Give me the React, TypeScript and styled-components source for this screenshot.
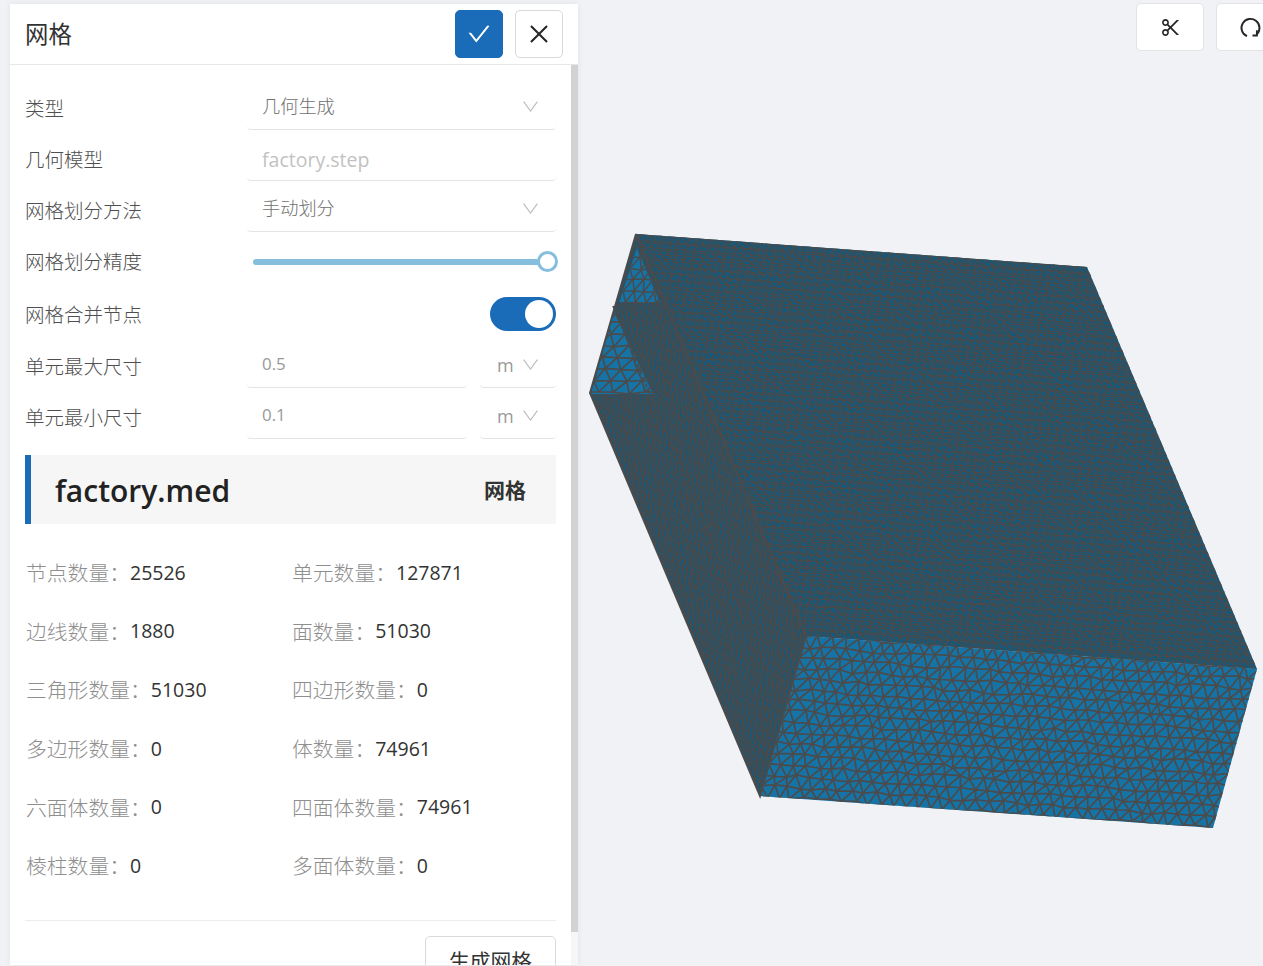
import React, { useMemo } from "react";
import styled, { createGlobalStyle } from "styled-components";
import { AiOutlineCheck, AiOutlineClose, AiOutlineScissor } from "react-icons/ai";

const GlobalStyle = createGlobalStyle`
  html, body { margin: 0; padding: 0; height: 100%; overflow: hidden; background: #f0f2f6; }
  * { box-sizing: border-box; }
  body { font-family: "Open Sans", "Noto Sans CJK SC", sans-serif; }
`;

const Page = styled.div`
  display: flex;
  height: 966px;
  width: 1263px;
  padding: 4px 0 1px 10px;
  overflow: hidden;
  background: #f0f2f6;
  position: relative;
`;

const Panel = styled.aside`
  position: relative;
  z-index: 1;
  flex: 0 0 568px;
  height: 961px;
  background: #fff;
  display: flex;
  flex-direction: column;
  box-shadow: 0 0 6px rgba(0, 0, 0, 0.07);
`;

const PanelHeader = styled.header`
  flex: 0 0 61px;
  display: flex;
  align-items: center;
  padding: 0 15px;
  border-bottom: 1px solid #e6e6e6;
`;

const Title = styled.h1`
  flex: 1;
  margin: 2px 0 0;
  font-size: 23.4px;
  font-weight: 400;
  color: #333;
  line-height: 1;
`;

const IconButton = styled.button<{ $primary?: boolean }>`
  width: 48px;
  height: 48px;
  margin-left: 12px;
  padding: 0;
  display: flex;
  align-items: center;
  justify-content: center;
  border-radius: 5px;
  font-size: 26px;
  color: ${(p) => (p.$primary ? "#fff" : "#262626")};
  background: ${(p) => (p.$primary ? "#1a6bb8" : "#fff")};
  border: 1px solid ${(p) => (p.$primary ? "#1a6bb8" : "#d9d9d9")};
`;

const PanelBody = styled.div`
  flex: 1;
  display: flex;
  min-height: 0;
`;

const Content = styled.div`
  flex: 1;
  min-width: 0;
  padding: 14px 15px 0;
  overflow: hidden;
`;

const ScrollTrack = styled.div`
  flex: 0 0 7px;
  background: #f6f6f6;
`;

const ScrollThumb = styled.div`
  height: 867px;
  background: #d2d2d2;
`;

const Row = styled.div<{ $height?: number; $center?: boolean }>`
  display: grid;
  grid-template-columns: 222px 1fr;
  height: ${(p) => p.$height ?? 51}px;
  align-items: ${(p) => (p.$center ? "center" : "end")};
`;

const Label = styled.label<{ $center?: boolean; $lift?: boolean }>`
  align-self: ${(p) => (p.$center ? "center" : "stretch")};
  display: flex;
  align-items: center;
  padding-top: ${(p) => (p.$center ? 0 : 5)}px;
  padding-bottom: ${(p) => (p.$lift ? 2 : 0)}px;
  font-size: 19.5px;
  font-weight: 300;
  color: #4f4f4f;
`;

const Control = styled.div<{ $width?: number }>`
  height: 46px;
  width: ${(p) => (p.$width ? `${p.$width}px` : "100%")};
  flex: ${(p) => (p.$width ? "none" : 1)};
  display: flex;
  align-items: center;
  padding: 0 15px;
  border-bottom: 1px solid #e4e4e4;
  border-radius: 0 0 4px 4px;
  font-size: 18.2px;
  color: #707070;
`;

const SelectText = styled.span`
  flex: 1;
  font-weight: 300;
  margin-top: -4px;
`;

const InputText = styled.span<{ $disabled?: boolean }>`
  font-size: ${(p) => (p.$disabled ? 19.5 : 16.9)}px;
  color: ${(p) => (p.$disabled ? "#c2c2c2" : "#999")};
  margin-top: ${(p) => (p.$disabled ? 3 : -2)}px;
`;

const UnitText = styled.span`
  flex: 1;
  font-size: 18px;
  color: #999;
`;

const Chevron = styled.svg`
  display: block;
  width: 15px;
  height: 11px;
  margin-right: 3px;
  fill: none;
  stroke: #bdbdbd;
  stroke-width: 1.2;
`;

const InputPair = styled.div`
  display: flex;
  gap: 13px;
  width: 100%;
`;

const UnitControl = styled(Control)`
  padding: 0 15px 0 17px;
`;

const SliderTrack = styled.div`
  position: relative;
  height: 6px;
  margin: 2px 9px 0 6px;
  background: #86bede;
  border-radius: 3px;
`;

const SliderHandle = styled.span`
  position: absolute;
  right: -11px;
  top: -8px;
  width: 21px;
  height: 21px;
  border-radius: 50%;
  background: #fff;
  border: 3px solid #86bede;
`;

const SwitchWrap = styled.div`
  display: flex;
  justify-content: flex-end;
`;

const Switch = styled.span`
  display: flex;
  justify-content: flex-end;
  align-items: center;
  width: 66px;
  height: 34px;
  padding: 0 3px;
  border-radius: 17px;
  background: #1a6bb8;
`;

const Knob = styled.span`
  width: 28px;
  height: 28px;
  border-radius: 50%;
  background: #fff;
`;

const FileCard = styled.section`
  display: flex;
  align-items: center;
  justify-content: space-between;
  height: 69px;
  margin-top: 16px;
  padding: 0 30px 0 24px;
  background: #f6f6f6;
  border-left: 6px solid #1a6bb8;
`;

const FileName = styled.span`
  margin-top: 2px;
  font-family: "Open Sans", sans-serif;
  font-size: 30px;
  font-weight: 600;
  color: #222;
`;

const FileKind = styled.span`
  margin-top: -2px;
  font-size: 21px;
  font-weight: 700;
  color: #333;
`;

const StatGrid = styled.dl`
  display: grid;
  grid-template-columns: 266px 1fr;
  grid-auto-rows: 58.6px;
  margin: 19px 0 0 1px;
  align-items: center;
`;

const Stat = styled.div`
  display: flex;
  align-items: center;
`;

const StatName = styled.dt`
  font-size: 20.8px;
  font-weight: 300;
  color: #8f8f8f;
`;

const StatValue = styled.dd`
  margin: 0;
  font-size: 19.5px;
  color: #333;
`;

const Divider = styled.hr`
  margin: 25px 0 0;
  border: 0;
  border-top: 1px solid #ececec;
`;

const Footer = styled.div`
  display: flex;
  justify-content: flex-end;
  margin-top: 15px;
`;

const GenerateButton = styled.button`
  width: 131px;
  height: 48px;
  padding: 0;
  border: 1px solid #d9d9d9;
  border-radius: 5px;
  background: #fff;
  font-family: inherit;
  font-size: 20.8px;
  font-weight: 400;
  color: #333;
`;

const Toolbar = styled.div`
  position: absolute;
  top: 3px;
  left: 1136px;
  display: flex;
  gap: 12px;
`;

const ToolButton = styled.button`
  flex: none;
  width: 68px;
  height: 48px;
  padding: 0;
  display: flex;
  align-items: center;
  justify-content: center;
  background: #fff;
  border: 1px solid #e3e3e3;
  border-radius: 5px;
  color: #262626;
  font-size: 23px;
`;

const MeshSvg = styled.svg`
  position: absolute;
  left: 0;
  top: 0;
  width: 1263px;
  height: 966px;
`;

type Pt = [number, number];

function rng(seed: number) {
  let s = seed;
  return () => {
    s = (s * 1664525 + 1013904223) % 4294967296;
    return s / 4294967296;
  };
}

function lattice(o: Pt, u: Pt, v: Pt, nu: number, nv: number, jitter: number, seed: number) {
  const r = rng(seed);
  const pts: Pt[][] = [];
  for (let j = 0; j <= nv; j++) {
    const row: Pt[] = [];
    for (let i = 0; i <= nu + 1; i++) {
      const a = (i - 0.5 + (j % 2 ? 0.5 : 0) + (r() - 0.5) * jitter) / nu;
      const b = (j + (r() - 0.5) * jitter) / nv;
      row.push([
        o[0] + (u[0] - o[0]) * a + (v[0] - o[0]) * b,
        o[1] + (u[1] - o[1]) * a + (v[1] - o[1]) * b,
      ]);
    }
    pts.push(row);
  }
  const seg = (p: Pt, q: Pt) =>
    `M${p[0].toFixed(1)} ${p[1].toFixed(1)}L${q[0].toFixed(1)} ${q[1].toFixed(1)}`;
  let d = "";
  for (let j = 0; j <= nv; j++) {
    for (let i = 0; i <= nu + 1; i++) {
      if (i <= nu) d += seg(pts[j][i], pts[j][i + 1]);
      if (j < nv) {
        d += seg(pts[j][i], pts[j + 1][i]);
        const k = j % 2 ? i + 1 : i - 1;
        if (k >= 0 && k <= nu + 1) d += seg(pts[j][i], pts[j + 1][k]);
      }
    }
  }
  return d;
}

const poly = (p: Pt[]) => p.map((q) => q.join(",")).join(" ");

type Layer = { o: Pt; u: Pt; v: Pt; nu: number; nv: number; w: number; j: number; seed: number };

function Face({ id, points, fill, layers }: { id: string; points: Pt[]; fill: string; layers: Layer[] }) {
  const paths = useMemo(
    () => layers.map((l) => lattice(l.o, l.u, l.v, l.nu, l.nv, l.j, l.seed)),
    [layers]
  );
  return (
    <g>
      <clipPath id={id}>
        <polygon points={poly(points)} />
      </clipPath>
      <polygon points={poly(points)} fill={fill} />
      <g clipPath={`url(#${id})`} fill="none" stroke="#4b4b4b">
        {paths.map((d, i) => (
          <path key={i} d={d} strokeWidth={layers[i].w} />
        ))}
      </g>
    </g>
  );
}

const A: Pt = [636, 234];
const B: Pt = [1087, 267];
const C: Pt = [1257, 669];
const D: Pt = [806, 636];
const E: Pt = [760, 796];
const F: Pt = [1213, 828];
const G: Pt = [590, 393];

const topLayers: Layer[] = [
  { o: A, u: B, v: D, nu: 56, nv: 62, w: 1.05, j: 0.2, seed: 11 },
  { o: A, u: B, v: D, nu: 47, nv: 52, w: 0.95, j: 0.25, seed: 29 },
];
const leftLayers: Layer[] = [
  { o: G, u: A, v: E, nu: 18, nv: 58, w: 1.05, j: 0.2, seed: 5 },
  { o: G, u: A, v: E, nu: 15, nv: 48, w: 0.95, j: 0.25, seed: 17 },
];
const frontLayers: Layer[] = [{ o: E, u: F, v: D, nu: 36, nv: 15, w: 1.7, j: 0.35, seed: 41 }];
const triLayerA: Layer[] = [
  { o: [619, 303], u: [662, 303], v: [638, 246], nu: 4, nv: 5, w: 1.5, j: 0.2, seed: 3 },
];
const triLayerB: Layer[] = [
  { o: [590, 393], u: [654, 393], v: [618, 311], nu: 4, nv: 7, w: 1.7, j: 0.2, seed: 7 },
];

function ChevronIcon() {
  return (
    <Chevron viewBox="0 0 15 11">
      <polyline points="0.6,0.6 7.5,10 14.4,0.6" />
    </Chevron>
  );
}

function SelectField({ label, value }: { label: string; value: string }) {
  return (
    <Row>
      <Label>{label}</Label>
      <Control>
        <SelectText>{value}</SelectText>
        <ChevronIcon />
      </Control>
    </Row>
  );
}

function SizeField({ label, value }: { label: string; value: string }) {
  return (
    <Row>
      <Label>{label}</Label>
      <InputPair>
        <Control>
          <InputText>{value}</InputText>
        </Control>
        <UnitControl $width={76}>
          <UnitText>m</UnitText>
          <ChevronIcon />
        </UnitControl>
      </InputPair>
    </Row>
  );
}

const stats: [string, string][] = [
  ["节点数量：", "25526"],
  ["单元数量：", "127871"],
  ["边线数量：", "1880"],
  ["面数量：", "51030"],
  ["三角形数量：", "51030"],
  ["四边形数量：", "0"],
  ["多边形数量：", "0"],
  ["体数量：", "74961"],
  ["六面体数量：", "0"],
  ["四面体数量：", "74961"],
  ["棱柱数量：", "0"],
  ["多面体数量：", "0"],
];

export default function App() {
  return (
    <Page>
      <GlobalStyle />
      <MeshSvg viewBox="0 0 1263 966">
        <Face id="left" points={[A, D, E, G]} fill="#0e5a80" layers={leftLayers} />
        <Face id="triA" points={[[637, 248], [660, 303], [619, 303]]} fill="#1673a6" layers={triLayerA} />
        <Face id="triB" points={[[614, 312], [653, 394], [591, 394]]} fill="#1673a6" layers={triLayerB} />
        <Face id="top" points={[A, B, C, D]} fill="#0e5a80" layers={topLayers} />
        <Face id="front" points={[D, C, F, E]} fill="#1673a6" layers={frontLayers} />
        <g fill="none" stroke="#4b4b4b" strokeWidth="2">
          <polyline points={poly([A, G, E, D])} />
          <line x1={A[0]} y1={A[1]} x2={D[0]} y2={D[1]} />
          <line x1={613} y1={306} x2={783} y2={712} strokeDasharray="4 3" strokeWidth="1.6" />
        </g>
      </MeshSvg>
      <Panel>
        <PanelHeader>
          <Title>网格</Title>
          <IconButton $primary aria-label="确定">
            <AiOutlineCheck />
          </IconButton>
          <IconButton aria-label="关闭">
            <AiOutlineClose />
          </IconButton>
        </PanelHeader>
        <PanelBody>
          <Content>
            <SelectField label="类型" value="几何生成" />
            <Row>
              <Label>几何模型</Label>
              <Control>
                <InputText $disabled>factory.step</InputText>
              </Control>
            </Row>
            <SelectField label="网格划分方法" value="手动划分" />
            <Row $height={58} $center>
              <Label $center $lift>网格划分精度</Label>
              <SliderTrack>
                <SliderHandle />
              </SliderTrack>
            </Row>
            <Row $height={47} $center>
              <Label $center>网格合并节点</Label>
              <SwitchWrap>
                <Switch>
                  <Knob />
                </Switch>
              </SwitchWrap>
            </Row>
            <SizeField label="单元最大尺寸" value="0.5" />
            <SizeField label="单元最小尺寸" value="0.1" />
            <FileCard>
              <FileName>factory.med</FileName>
              <FileKind>网格</FileKind>
            </FileCard>
            <StatGrid>
              {stats.map(([name, value]) => (
                <Stat key={name}>
                  <StatName>{name}</StatName>
                  <StatValue>{value}</StatValue>
                </Stat>
              ))}
            </StatGrid>
            <Divider />
            <Footer>
              <GenerateButton>生成网格</GenerateButton>
            </Footer>
          </Content>
          <ScrollTrack>
            <ScrollThumb />
          </ScrollTrack>
        </PanelBody>
      </Panel>
      <Toolbar>
        <ToolButton aria-label="裁剪">
          <AiOutlineScissor />
        </ToolButton>
        <ToolButton aria-label="旋转">
          <svg width="23" height="23" viewBox="0 0 23 23" fill="none" stroke="currentColor" strokeWidth="1.9">
            <path d="M8 20.2A9 9 0 1 1 17.5 18.6" />
            <path d="M17.9 14.2v5.3h-4.4" fill="none" />
          </svg>
        </ToolButton>
      </Toolbar>
    </Page>
  );
}
